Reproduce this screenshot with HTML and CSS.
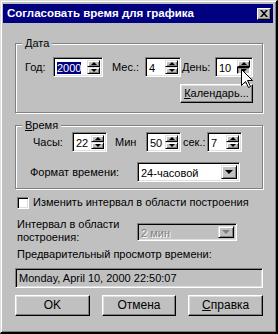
FILE: index.html
```html
<!DOCTYPE html>
<html lang="ru">
<head>
<meta charset="utf-8">
<title>Согласовать время для графика</title>
<link rel="stylesheet" href="styles.css">
</head>
<body>
<div class="window">
  <div class="titlebar">
    <span class="title">Согласовать время для графика</span>
    <span class="close"><svg width="8" height="7" viewBox="0 0 8 7"><path d="M0 0h2l2 2.2L6 0h2L5 3.5 8 7H6L4 4.8 2 7H0l3-3.5z" fill="#000"/></svg></span>
  </div>
  <div class="content">
    <fieldset class="group group-date">
      <legend><u>Д</u>ата</legend>
      <div class="row date-row">
        <span class="lbl l-year">Год:</span>
        <div class="spin s-year"><span class="val"><span class="sel">2000</span></span><span class="arrows"><span class="ab up"></span><span class="ab down"></span></span></div>
        <span class="lbl l-mon">Мес.:</span>
        <div class="spin s-mon"><span class="val">4</span><span class="arrows"><span class="ab up"></span><span class="ab down"></span></span></div>
        <span class="lbl l-day">День:</span>
        <div class="spin s-day"><span class="val">10</span><span class="arrows"><span class="ab up"></span><span class="ab down pressed"></span></span></div>
      </div>
      <div class="row cal-row">
        <div class="btn cal"><span><u>К</u>алендарь...</span></div>
      </div>
    </fieldset>

    <fieldset class="group group-time">
      <legend><u>В</u>ремя</legend>
      <div class="row time-row">
        <span class="lbl l-hour">Часы:</span>
        <div class="spin s-t"><span class="val">22</span><span class="arrows"><span class="ab up"></span><span class="ab down"></span></span></div>
        <span class="lbl l-min">Мин</span>
        <div class="spin s-t"><span class="val">50</span><span class="arrows"><span class="ab up"></span><span class="ab down"></span></span></div>
        <span class="lbl l-sec">сек.:</span>
        <div class="spin s-t"><span class="val">7</span><span class="arrows"><span class="ab up"></span><span class="ab down"></span></span></div>
      </div>
      <div class="row fmt-row">
        <span class="lbl l-fmt">Формат времени:</span>
        <div class="select s-fmt"><span class="val">24-часовой</span><span class="dd"><span class="tri"></span></span></div>
      </div>
    </fieldset>

    <div class="row check-row">
      <span class="checkbox"></span>
      <span class="check-text">Изменить интервал в области построения</span>
    </div>

    <div class="row interval-row">
      <span class="lbl l-int">Интервал в области построения:</span>
      <div class="select s-int disabled"><span class="val">2 мин</span><span class="dd"><span class="tri"></span></span></div>
    </div>

    <div class="preview-label">Предварительный просмотр времени:</div>
    <div class="preview">Monday, April 10, 2000 22:50:07</div>

    <div class="buttons">
      <div class="btn"><span>OK</span></div>
      <div class="btn"><span>Отмена</span></div>
      <div class="btn"><span><u>С</u>правка</span></div>
    </div>
  </div>
  <svg class="cursor" width="13" height="20" viewBox="0 0 13 20"><path d="M0.5 0.5V16.5L4.5 12.5L7.5 18.5L9.5 17.5L6.5 11.5H11.5Z" fill="#fff" stroke="#000" stroke-width="1"/></svg>
</div>
</body>
</html>
```

FILE: styles.css
```css
* { box-sizing: border-box; }

body {
  margin: 0;
  background: #000;
  font-family: "Liberation Sans", Arial, sans-serif;
  font-size: 11px;
  line-height: 13px;
  color: #000;
}

u { text-decoration: underline; text-underline-offset: 1px; }

.window {
  position: relative;
  width: 278px;
  height: 334px;
  background: #c0c0c0;
  border-style: solid;
  border-width: 1px 2px 2px 1px;
  border-color: #dfdfdf #000 #000 #dfdfdf;
  box-shadow: inset 1px 1px #fff, inset -1px -1px #808080;
  padding: 3px 3px 0 2px;
}

.titlebar {
  height: 19px;
  background: #000080;
  display: flex;
  align-items: center;
  justify-content: space-between;
  padding: 0 2px 0 4px;
}

.title {
  color: #fff;
  font-weight: bold;
  font-size: 11.5px;
  line-height: 19px;
  white-space: nowrap;
}

.close {
  width: 14px;
  height: 12px;
  background: #c0c0c0;
  border: 1px solid;
  border-color: #fff #000 #000 #fff;
  box-shadow: inset -1px -1px #808080;
  display: flex;
  align-items: center;
  justify-content: center;
}

.content {
  padding: 14px 10px 0 12px;
}

.group {
  margin: 0;
  min-width: 0;
  border: 1px solid #808080;
  box-shadow: inset 1px 1px #fff, 1px 1px #fff;
}

.group legend {
  padding: 0 3px;
  margin: 0;
  line-height: 13px;
  background: #c0c0c0;
}

.group-date { padding: 7px 9px 9px 6px; }
.group-time { padding: 0 9px 6px 6px; margin-top: 6px; }

.row { display: flex; align-items: center; }

.lbl { white-space: nowrap; flex: none; }

.date-row { padding-left: 3px; }
.l-year { width: 28px; }
.l-mon { width: 33px; margin-left: 9px; }
.l-day { width: 33px; margin-left: 1px; }

.spin {
  display: flex;
  height: 20px;
  flex: none;
  background: #fff;
  border: 1px solid;
  border-color: #808080 #fff #fff #808080;
  box-shadow: inset 1px 1px #000, inset -1px -1px #dfdfdf;
  padding: 2px;
}
.spin .val {
  flex: 1;
  padding-left: 1px;
  line-height: 16px;
  font-size: 11px;
  white-space: nowrap;
}
.sel { background: #000080; color: #fff; }

.s-year { width: 50px; }
.s-mon { width: 36px; }
.s-day { width: 38px; }
.s-t { width: 35px; }

.arrows {
  width: 13px;
  display: flex;
  flex-direction: column;
  flex: none;
}
.ab {
  flex: 1;
  background: #c0c0c0;
  border: 1px solid;
  border-color: #dfdfdf #000 #000 #dfdfdf;
  box-shadow: inset 1px 1px #fff, inset -1px -1px #808080;
  display: flex;
  align-items: center;
  justify-content: center;
}
.ab::after {
  content: "";
  width: 0;
  height: 0;
  border-left: 3px solid transparent;
  border-right: 3px solid transparent;
}
.ab.up::after { border-bottom: 3px solid #000; }
.ab.down::after { border-top: 3px solid #000; }
.ab.pressed {
  border-color: #000 #fff #fff #000;
  box-shadow: inset 1px 1px #808080;
}

.cal-row { justify-content: flex-end; margin-top: 7px; }

.btn {
  height: 19px;
  background: #c0c0c0;
  border: 1px solid;
  border-color: #fff #000 #000 #fff;
  box-shadow: inset -1px -1px #808080, inset 1px 1px #dfdfdf;
  display: flex;
  align-items: center;
  justify-content: center;
  font-size: 11px;
  white-space: nowrap;
}
.cal { width: 73px; }

.time-row { padding-left: 11px; }
.l-hour { width: 39px; }
.l-min { width: 31px; margin-left: 8px; }
.l-sec { width: 24px; margin-left: 2px; }

.fmt-row { padding-left: 8px; margin-top: 10px; }
.l-fmt { width: 107px; }

.select {
  display: flex;
  height: 20px;
  flex: none;
  background: #fff;
  border: 1px solid;
  border-color: #808080 #fff #fff #808080;
  box-shadow: inset 1px 1px #000, inset -1px -1px #dfdfdf;
  padding: 2px;
}
.select .val {
  flex: 1;
  padding-left: 1px;
  line-height: 16px;
  font-size: 11px;
  white-space: nowrap;
}
.dd {
  width: 16px;
  flex: none;
  background: #c0c0c0;
  border: 1px solid;
  border-color: #dfdfdf #000 #000 #dfdfdf;
  box-shadow: inset 1px 1px #fff, inset -1px -1px #808080;
  display: flex;
  align-items: center;
  justify-content: center;
}
.tri {
  width: 0;
  height: 0;
  border-left: 4px solid transparent;
  border-right: 4px solid transparent;
  border-top: 4px solid #000;
}
.s-fmt { width: 103px; }

.check-row {
  margin-top: 7px;
  height: 13px;
  padding-left: 2px;
}
.checkbox {
  width: 12px;
  height: 12px;
  flex: none;
  background: #fff;
  border: 1px solid;
  border-color: #808080 #fff #fff #808080;
  box-shadow: inset 1px 1px #000, inset -1px -1px #dfdfdf;
}
.check-text { margin-left: 4px; white-space: nowrap; }

.interval-row {
  margin-top: 9px;
  padding-left: 2px;
  align-items: flex-start;
}
.l-int { width: 120px; white-space: normal; }
.s-int { width: 100px; height: 18px; margin-top: 5px; }
.select.disabled { background: #c0c0c0; }
.select.disabled .val { color: #808080; text-shadow: 1px 1px #fff; line-height: 14px; }
.select.disabled .tri { border-top-color: #808080; }

.preview-label {
  margin-top: 4px;
  padding-left: 2px;
  white-space: nowrap;
}

.preview {
  margin-top: 7px;
  height: 20px;
  background: #c0c0c0;
  border: 1px solid;
  border-color: #808080 #fff #fff #808080;
  box-shadow: inset 1px 1px #000, inset -1px -1px #dfdfdf;
  padding: 0 3px;
  line-height: 18px;
  font-size: 11px;
  white-space: nowrap;
}

.buttons {
  margin-top: 7px;
  display: grid;
  grid-template-columns: repeat(3, 1fr);
  gap: 12px;
}
.buttons .btn { height: 21px; font-size: 12px; }

.cursor {
  position: absolute;
  left: 240px;
  top: 68px;
}
```
